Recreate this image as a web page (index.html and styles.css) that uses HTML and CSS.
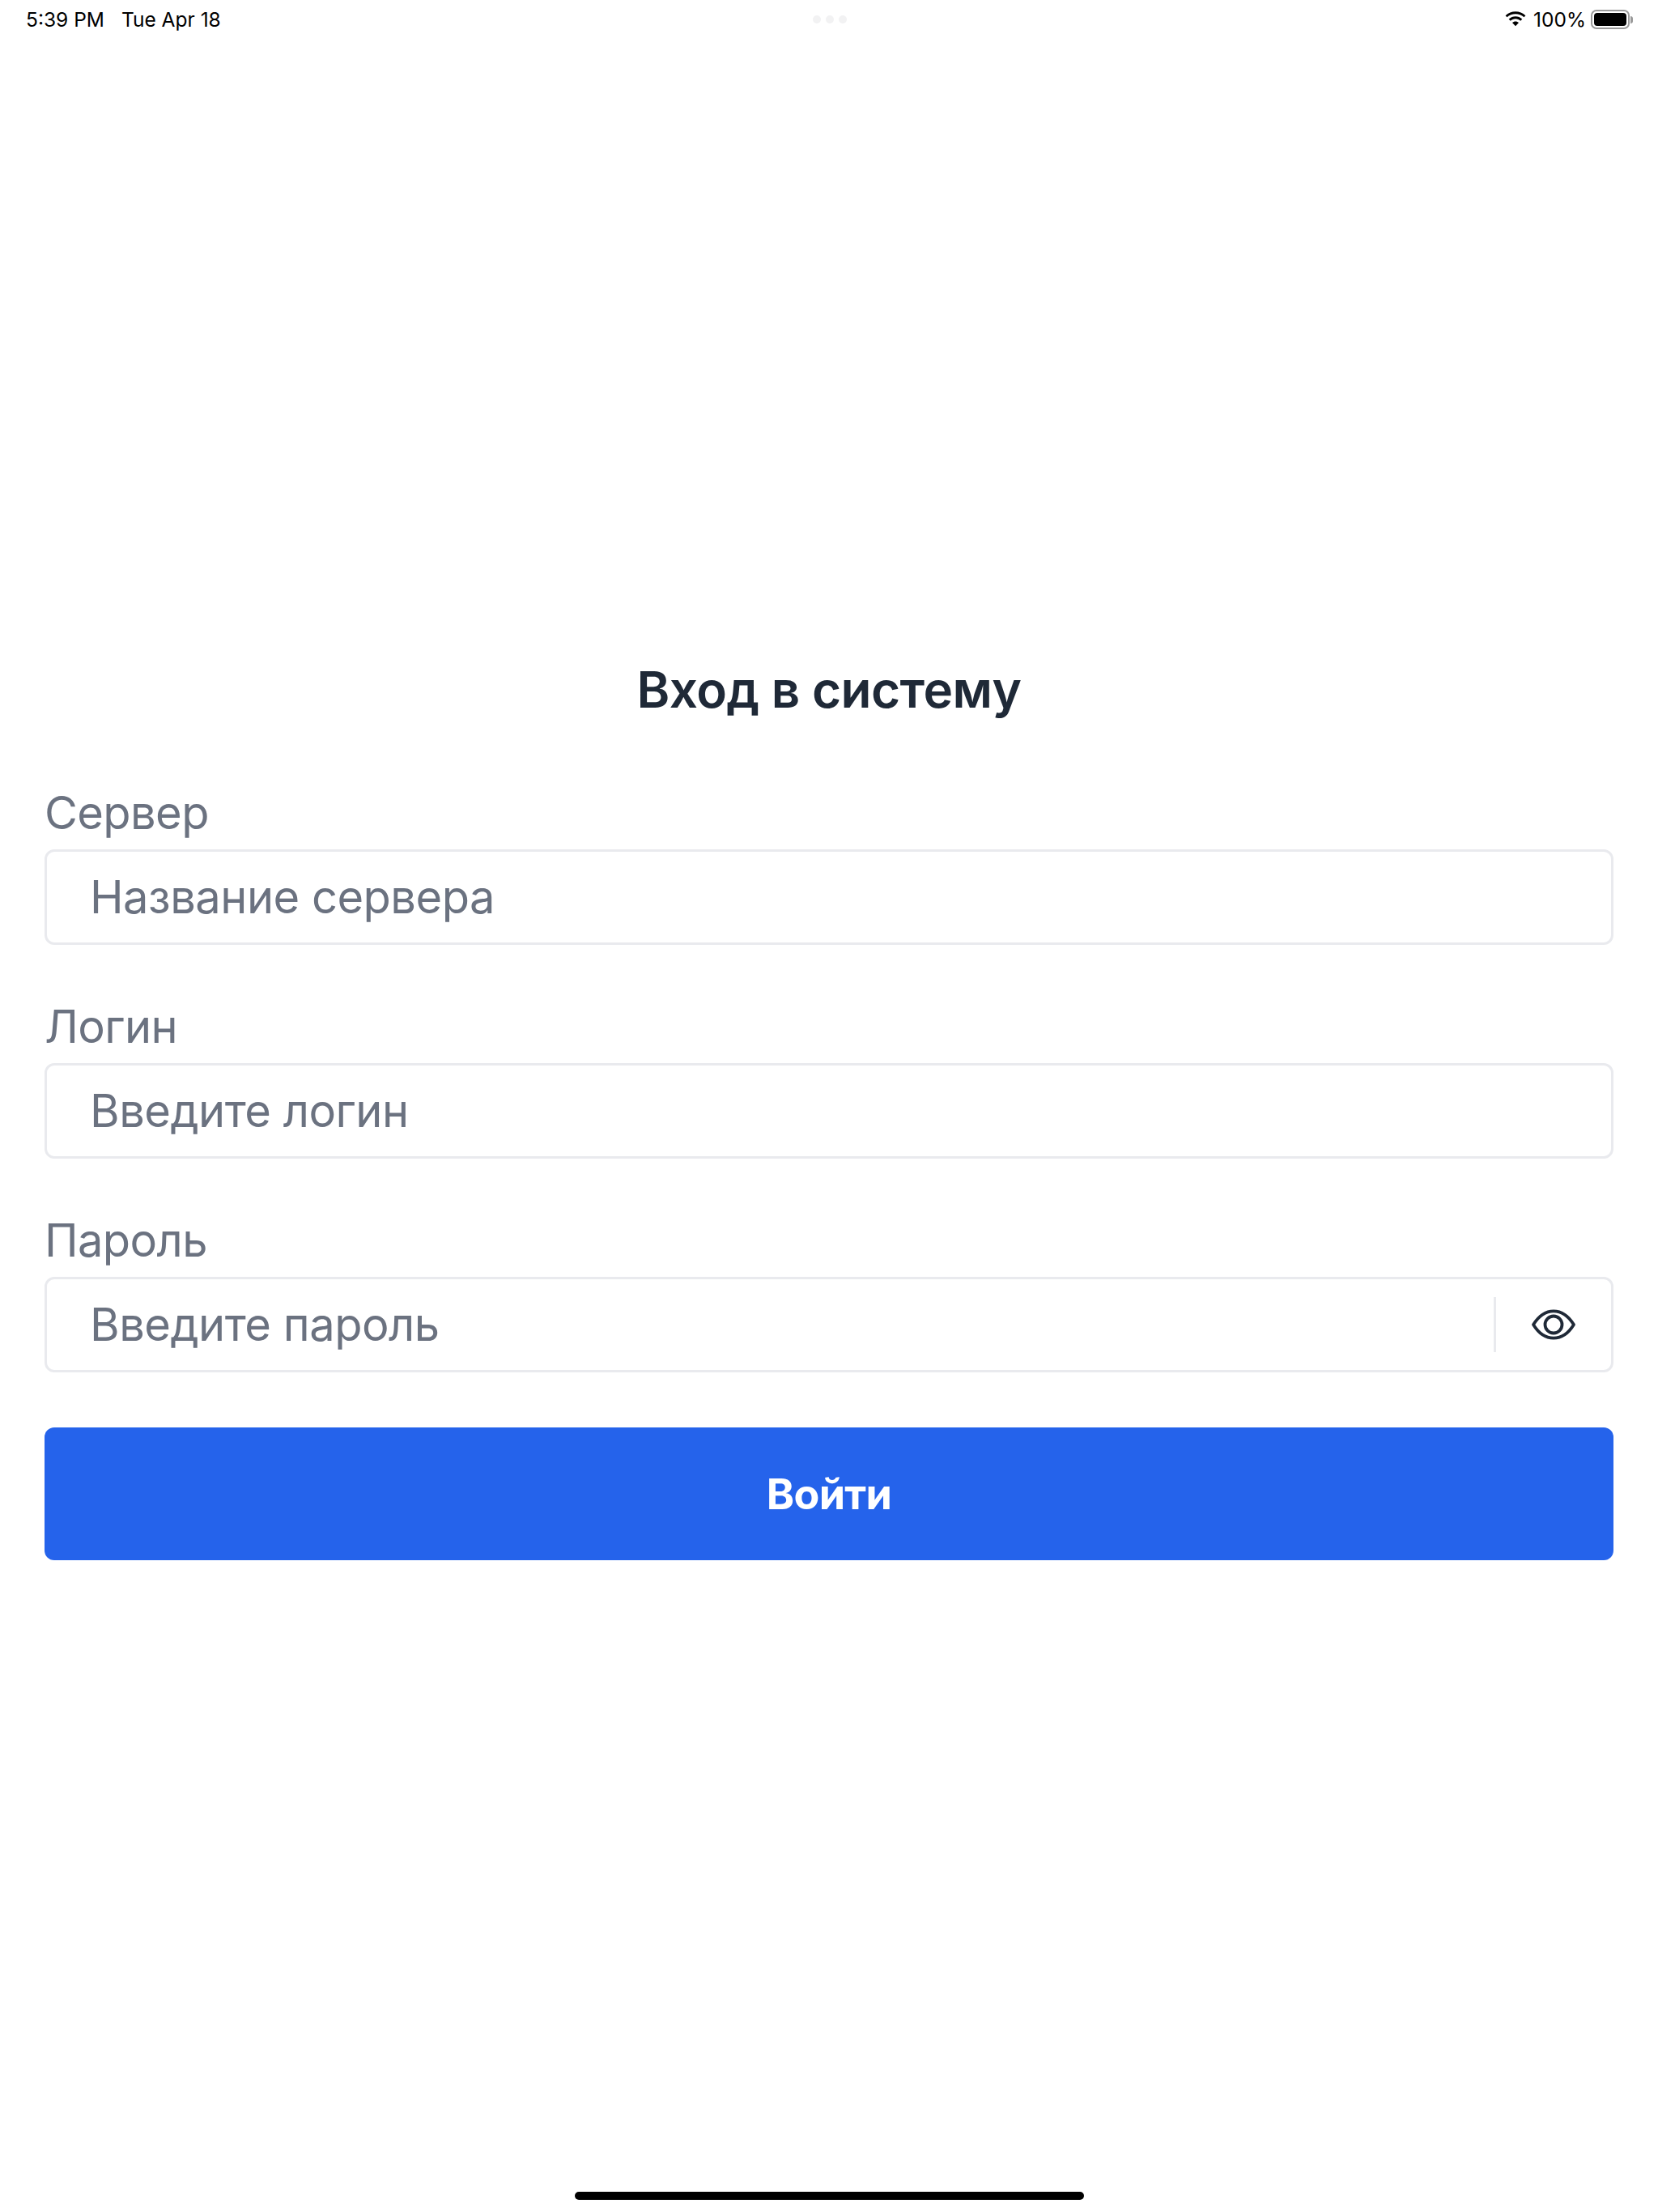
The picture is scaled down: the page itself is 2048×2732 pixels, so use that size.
FILE: index.html
```html
<!DOCTYPE html>
<html lang="ru">
<head>
  <meta charset="UTF-8" />
  <meta name="viewport" content="width=device-width, initial-scale=1.0"/>
  <title>Вход в систему</title>
  <link rel="stylesheet" href="styles.css">
</head>
<body>
  <div class="status-bar">
    <div class="status-left">
      <span>5:39 PM</span>
      <span>Tue Apr 18</span>
    </div>
    <div class="status-dots">
      <span></span><span></span><span></span>
    </div>
    <div class="status-right">
      <svg class="wifi" viewBox="0 0 28 20" width="28" height="20">
        <path d="M14 3.2c4 0 7.700 1.500 10.500 4.100l1.900-2.100C22.900 2 18.600.2 14 .2S5.100 2 1.600 5.200l1.900 2.100C6.300 4.700 10 3.200 14 3.200z"/>
        <path d="M14 9.300c2.400 0 4.600.9 6.300 2.400l2-2.100C20 7.500 17.100 6.300 14 6.300S8 7.500 5.700 9.600l2 2.100c1.700-1.500 3.900-2.400 6.300-2.400z"/>
        <path d="M14 12.400c-1.500 0-2.900.6-4 1.500l4 4.300 4-4.300c-1.100-.9-2.500-1.500-4-1.500z"/>
      </svg>
      <span>100%</span>
      <div class="battery">
        <div class="battery-level"></div>
      </div>
      <div class="battery-tip"></div>
    </div>
  </div>

  <main class="login">
    <h1 class="login-title">Вход в систему</h1>

    <form class="login-form">
      <div class="field">
        <label class="field-label" for="server">Сервер</label>
        <div class="field-box">
          <input class="field-input" id="server" type="text" placeholder="Название сервера">
        </div>
      </div>
      <div class="field">
        <label class="field-label" for="login">Логин</label>
        <div class="field-box">
          <input class="field-input" id="login" type="text" placeholder="Введите логин">
        </div>
      </div>
      <div class="field">
        <label class="field-label" for="password">Пароль</label>
        <div class="field-box">
          <input class="field-input" id="password" type="password" placeholder="Введите пароль">
          <div class="field-divider"></div>
          <button class="eye-btn" type="button" aria-label="Показать пароль">
            <svg viewBox="0 0 56 40" width="56" height="40" fill="none" stroke="#1f2937" stroke-width="3.800">
              <path d="M3 20C9.500 9.500 18 3.300 28 3.300S46.500 9.500 53 20C46.500 30.500 38 36.700 28 36.700S9.500 30.500 3 20z" stroke-linejoin="round"/>
              <circle cx="28" cy="20" r="10.500"/>
            </svg>
          </button>
        </div>
      </div>
      <button class="submit-btn" type="button">Войти</button>
    </form>
  </main>

  <div class="home-bar"></div>
</body>
</html>
```

FILE: styles.css
```css
* {
  box-sizing: border-box;
}
body {
  margin: 0;
  min-height: 100vh;
  display: flex;
  flex-direction: column;
  font-family: 'Inter', 'Liberation Sans', sans-serif;
  background-color: #fff;
}
.status-bar {
  height: 48px;
  padding: 0 31px 0 32px;
  display: grid;
  grid-template-columns: 1fr auto 1fr;
  align-items: center;
  font-size: 24.500px;
  color: #000;
}
.status-left {
  display: flex;
  gap: 21px;
}
.status-dots {
  display: flex;
  gap: 6px;
}
.status-dots span {
  width: 10px;
  height: 10px;
  border-radius: 50%;
  background: #f2f2f3;
}
.status-right {
  display: flex;
  align-items: center;
  justify-content: flex-end;
}
.status-right .wifi {
  margin-right: 8px;
}
.battery {
  width: 48px;
  height: 24px;
  margin-left: 6px;
  padding: 2px;
  border: 2px solid #9a9a9a;
  border-radius: 7px;
}
.battery-level {
  height: 100%;
  background: #000;
  border-radius: 4px;
}
.battery-tip {
  width: 3px;
  height: 9px;
  margin-left: 1px;
  background: #9a9a9a;
  border-radius: 0 4px 4px 0;
}
.login {
  flex: 1;
  padding: 764px 55px 0;
}
.login-title {
  margin: 0 0 79px;
  font-size: 62px;
  line-height: 80px;
  font-weight: 600;
  letter-spacing: -0.5px;
  text-align: center;
  color: #1f2937;
}
.login-form {
  display: flex;
  flex-direction: column;
}
.field {
  margin-bottom: 68px;
}
.field-label {
  display: block;
  font-size: 56px;
  line-height: 66px;
  letter-spacing: -0.6px;
  margin-bottom: 12px;
  color: #6b7280;
}
.field-box {
  height: 118px;
  display: flex;
  align-items: center;
  background: #fff;
  border: 3px solid #e9eaee;
  border-radius: 12px;
}
.field-input {
  flex: 1;
  min-width: 0;
  padding: 0 0 0 53px;
  border: none;
  outline: none;
  background: transparent;
  font-family: inherit;
  font-size: 56px;
  letter-spacing: -0.5px;
  color: #1f2937;
}
.field-input::placeholder {
  color: #6b7280;
  opacity: 1;
}
.field-divider {
  width: 3px;
  height: 68px;
  background: #e9eaee;
}
.eye-btn {
  width: 142px;
  height: 100%;
  padding: 0;
  border: none;
  background: transparent;
  display: flex;
  align-items: center;
  justify-content: center;
}
.submit-btn {
  height: 164px;
  border: none;
  border-radius: 12px;
  background: #2563eb;
  color: #fff;
  font-family: inherit;
  font-size: 52px;
  font-weight: 700;
  letter-spacing: -0.7px;
}
.home-bar {
  width: 629px;
  height: 10px;
  margin: 0 auto 15px;
  background: #000;
  border-radius: 5px;
}
```
